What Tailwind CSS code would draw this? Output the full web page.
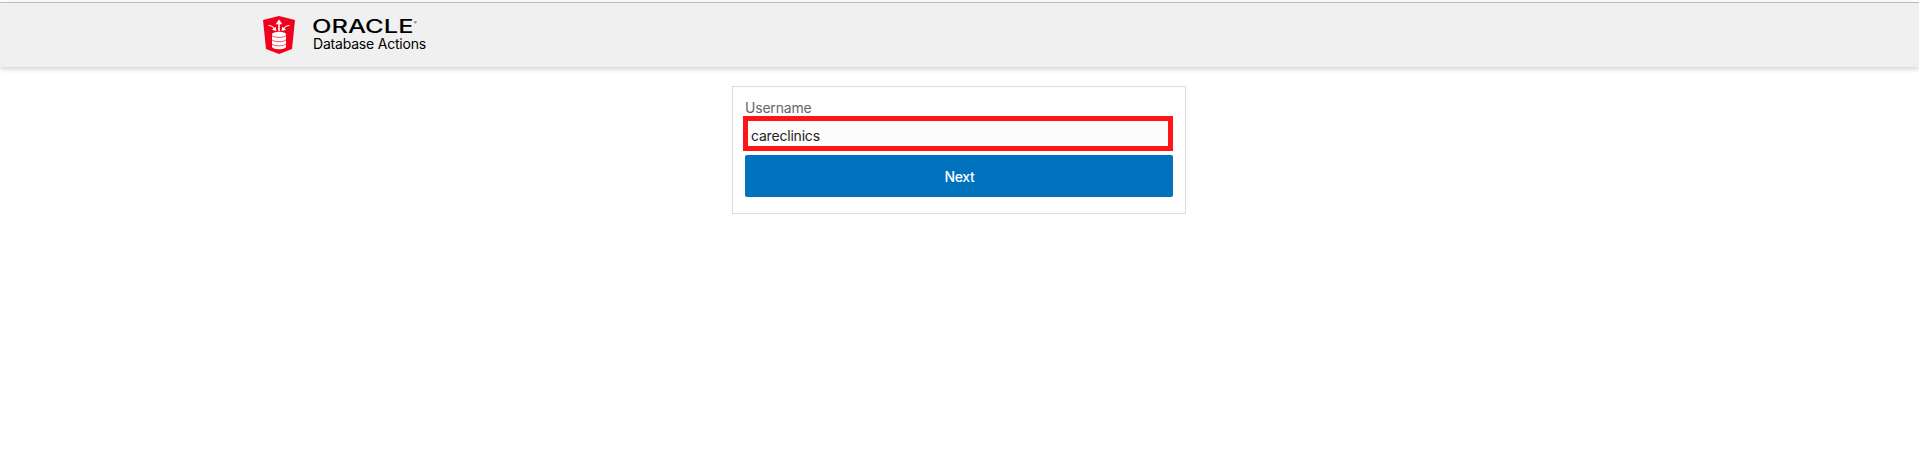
<!DOCTYPE html>
<html lang="en">
<head>
<meta charset="utf-8">
<title>Database Actions</title>
<script src="https://cdn.jsdelivr.net/npm/@tailwindcss/browser@4"></script>
</head>
<body class="h-screen overflow-hidden bg-white font-['Inter',sans-serif] text-sm tracking-[-0.2px] text-black">
<header class="mt-[2px] flex h-[65px] items-start border-t border-[#bdbdbd] bg-[#f0f0f0] pt-[13px] pl-[263px] shadow-[0_2px_5px_rgba(0,0,0,0.18)]">
  <svg class="h-[38px] w-[32px]" viewBox="0 0 32 38">
    <path fill="#f0001c" d="M16 0 32 4 29 33 16 38 3 33 0 4Z"/>
    <g fill="none" stroke="#fff">
      <path stroke-width="1.6" d="M16 15V6"/>
      <path stroke-width="1.2" d="M5.5 9.5Q9.5 9.5 11.5 13M26.5 9.5Q22.5 9.5 20.500 13"/>
    </g>
    <path fill="#fff" d="M16 3.500 19.300 8.300H12.700ZM13.300 15 9 13.800 12.700 10.700ZM18.700 15 23 13.800 19.300 10.700Z"/>
    <path fill="#fff" d="M9 18.500C9 14.900 23 14.900 23 18.500V30.500C23 34.200 9 34.200 9 30.500Z"/>
    <path fill="none" stroke="#f0001c" stroke-width=".7" d="M9 19.500C10.500 22 21.500 22 23 19.500M9 23.800C10.500 26.300 21.500 26.300 23 23.800M9 28C10.500 30.500 21.500 30.500 23 28"/>
  </svg>
  <div class="ml-[14px] flex flex-col">
    <svg class="h-[22px] w-[114px]" viewBox="-4 -4 114 22">
      <text x="-1" y="13" font-family="Inter" font-size="18" font-weight="500" letter-spacing="0" textLength="101.500" lengthAdjust="spacingAndGlyphs">ORACLE</text>
      <text x="101" y="4" font-family="Inter" font-size="4">®</text>
    </svg>
    <div class="-mt-[4px] ml-[4px] leading-5">Database Actions</div>
  </div>
</header>
<main class="flex justify-center pt-[19px] pr-px">
  <form class="h-[128px] w-[454px] border border-[#dcdcdc] pt-[11px] pr-[12px] pl-[10px]">
    <label for="user" class="block h-[18px] pl-[2px] leading-5 text-[#666]">Username</label>
    <input id="user" value="careclinics" class="block h-[35px] w-[430px] border-5 border-[#ff1417] bg-[#fcfcfc] pt-[3px] pl-[3px] text-[#222] outline-none">
    <button type="button" class="mt-1 ml-[2px] block h-[42px] w-[428px] rounded-[2px] bg-[#0072be] pt-[2px] pl-px font-medium tracking-[-0.3px] text-white">Next</button>
  </form>
</main>
</body>
</html>
